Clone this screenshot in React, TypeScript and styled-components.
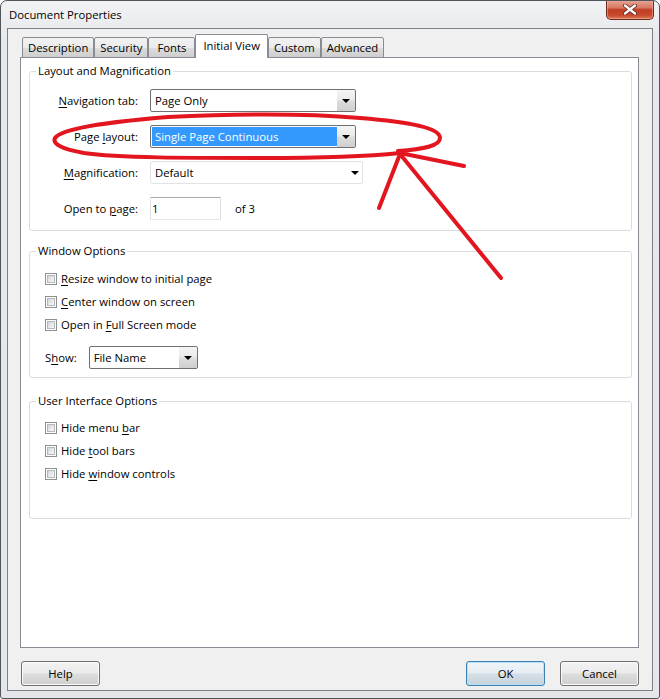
import React from "react";
import styled, { createGlobalStyle } from "styled-components";

const Global = createGlobalStyle`
  html, body { margin: 0; padding: 0; background: #ffffff; }
  body {
    font-family: "Open Sans", "Noto Sans", "DejaVu Sans", sans-serif;
    font-size: 11.3px;
    color: #000;
  }
  * { box-sizing: border-box; }
`;

const Window = styled.div`
  position: relative;
  width: 660px;
  height: 699px;
  border: 1px solid #50555b;
  border-radius: 7px 7px 3px 3px;
  background: linear-gradient(180deg, #f0f2f4 0px, #e6e8eb 40px, #e4e6e9 100%);
  display: flex;
  flex-direction: column;
  overflow: hidden;
`;

const TitleBar = styled.div`
  height: 27px;
  display: flex;
  align-items: flex-start;
  padding-left: 8px;
  flex-shrink: 0;
`;

const Title = styled.div`
  line-height: 27px;
  color: #000;
  text-shadow: 0 0 6px rgba(255, 255, 255, 0.9);
`;

const CloseButton = styled.div`
  margin-left: auto;
  margin-right: 5px;
  margin-top: -1px;
  width: 48px;
  height: 20px;
  border: 1px solid #6a2a1e;
  border-top: none;
  border-radius: 0 0 5px 5px;
  background: linear-gradient(180deg, #e9a898 0%, #d77a64 40%, #c23d22 52%, #c74a2e 80%, #dd7a58 100%);
  box-shadow: inset 0 0 0 1px rgba(255, 200, 180, 0.45);
  display: flex;
  align-items: center;
  justify-content: center;
`;

const Client = styled.div`
  margin: 0 6px;
  height: 663px;
  border: 1px solid #7d8185;
  background: #f0f0f0;
  padding: 5px 13px 0 12px;
  display: flex;
  flex-direction: column;
`;

const TabStrip = styled.div`
  display: flex;
  align-items: flex-end;
  padding-left: 2px;
  margin-bottom: -1px;
  position: relative;
  z-index: 1;
  height: 24px;
`;

const Tab = styled.div<{ $active?: boolean }>`
  min-width: 47px;
  height: ${(p) => (p.$active ? 24 : 21)}px;
  padding: 0 ${(p) => (p.$active ? 7 : 5)}px;
  padding-bottom: ${(p) => (p.$active ? 3 : 1)}px;
  border: 1px solid #898c95;
  border-bottom: ${(p) => (p.$active ? "none" : "1px solid #898c95")};
  border-radius: 2px 2px 0 0;
  background: ${(p) => (p.$active ? "#ffffff" : "linear-gradient(180deg, #f2f2f2 0%, #ebebeb 50%, #dddddd 51%, #cfcfcf 100%)")};
  display: flex;
  align-items: center;
  justify-content: center;
  white-space: nowrap;
`;

const Pane = styled.div`
  height: 591px;
  border: 1px solid #898c95;
  background: #ffffff;
  padding: 5px 6px 0 8px;
  display: flex;
  flex-direction: column;
  flex-shrink: 0;
`;

const Group = styled.fieldset<{ $h: number; $mt: number }>`
  margin: ${(p) => p.$mt}px 0 0 0;
  padding: 0;
  height: ${(p) => p.$h}px;
  min-width: 0;
  border: 1px solid #dadcdf;
  border-radius: 3px;
  flex-shrink: 0;
`;

const Legend = styled.legend`
  margin-left: 6px;
  padding: 0 2px;
  line-height: 16px;
`;

const FormGrid = styled.div`
  margin-top: 10px;
  display: grid;
  grid-template-columns: 110px auto;
  column-gap: 10px;
  row-gap: 13px;
  grid-auto-rows: 23px;
  align-items: center;
  justify-items: start;
`;

const Label = styled.div`
  justify-self: end;
  padding-right: 2px;
  white-space: nowrap;
`;

const U = styled.span`
  text-decoration: underline;
  text-underline-offset: 2px;
`;

const Combo = styled.div<{ $w: number; $flat?: boolean }>`
  width: ${(p) => p.$w}px;
  height: 23px;
  display: flex;
  align-items: stretch;
  border: 1px solid ${(p) => (p.$flat ? "#e1e3e6" : "#707070")};
  border-radius: 2px;
  background: #ffffff;
  overflow: hidden;
`;

const ComboText = styled.div<{ $selected?: boolean }>`
  flex: 1;
  margin: 1px 0 1px 1px;
  padding-left: 3px;
  display: flex;
  align-items: center;
  white-space: nowrap;
  background: ${(p) => (p.$selected ? "#3399ff" : "transparent")};
  color: ${(p) => (p.$selected ? "#ffffff" : "#000000")};
`;

const ComboButton = styled.div<{ $flat?: boolean }>`
  width: ${(p) => (p.$flat ? 15 : 18)}px;
  display: flex;
  align-items: center;
  justify-content: center;
  background: ${(p) => (p.$flat ? "transparent" : "linear-gradient(180deg, #f4f4f4 0%, #ebebeb 45%, #dcdcdc 55%, #cfcfcf 100%)")};
`;

const Arrow = styled.span`
  width: 0;
  height: 0;
  border-left: 4px solid transparent;
  border-right: 4px solid transparent;
  border-top: 4px solid #000;
  margin-top: 1px;
`;

const PageRow = styled.div`
  display: flex;
  align-items: center;
  gap: 14px;
`;

const TextInput = styled.div`
  width: 71px;
  height: 23px;
  border: 1px solid;
  border-color: #abadb3 #dbdfe6 #e3e9ef #e2e3ea;
  background: #fff;
  padding-left: 1px;
  display: flex;
  align-items: center;
`;

const Options = styled.div<{ $pt: number }>`
  padding: ${(p) => p.$pt}px 0 0 15px;
  display: flex;
  flex-direction: column;
  gap: 6px;
`;

const CheckRow = styled.label`
  height: 17px;
  display: flex;
  align-items: center;
  gap: 4px;
  white-space: nowrap;
`;

const CheckBox = styled.span`
  width: 12px;
  height: 12px;
  border: 1px solid #8e8f8f;
  background: #ffffff;
  padding: 1px;
  display: flex;
  &::after {
    content: "";
    flex: 1;
    border: 1px solid #b4b7bb;
    background: linear-gradient(135deg, #d3d5d8 0%, #e8e9ea 55%, #f7f7f7 100%);
  }
`;

const ShowRow = styled.div`
  margin-top: 7px;
  height: 23px;
  display: flex;
  align-items: center;
  gap: 12px;
`;

const Footer = styled.div`
  margin-top: 13px;
  padding-left: 1px;
  display: flex;
  align-items: center;
  gap: 15px;
`;

const Button = styled.div<{ $default?: boolean }>`
  width: 79px;
  height: 25px;
  border: 1px solid ${(p) => (p.$default ? "#3c7fb1" : "#707070")};
  border-radius: 3px;
  background: ${(p) =>
    p.$default
      ? "linear-gradient(180deg, #f0f4f7 0%, #e6edf2 48%, #d4dee6 52%, #c7d4de 100%)"
      : "linear-gradient(180deg, #f2f2f2 0%, #ebebeb 48%, #dddddd 52%, #cfcfcf 100%)"};
  box-shadow: inset 0 0 0 1px ${(p) => (p.$default ? "#b9e2f7" : "#fbfbfb")};
  display: flex;
  align-items: center;
  justify-content: center;
`;

const Spacer = styled.div`
  flex: 1;
`;

const Annotation = styled.svg`
  position: absolute;
  left: -1px;
  top: -1px;
  width: 660px;
  height: 699px;
  pointer-events: none;
  z-index: 5;
`;

const tabs = ["Description", "Security", "Fonts", "Initial View", "Custom", "Advanced"];

export default function App() {
  return (
    <>
      <Global />
      <Window>
        <TitleBar>
          <Title>Document Properties</Title>
          <CloseButton aria-label="Close">
            <svg width="14" height="11" viewBox="0 0 14 11">
              <path d="M2 1.5 L12 9.5 M12 1.5 L2 9.5" stroke="#5a2218" strokeWidth="4" strokeLinecap="round" />
              <path d="M2 1.5 L12 9.5 M12 1.5 L2 9.5" stroke="#ffffff" strokeWidth="2.4" strokeLinecap="round" />
            </svg>
          </CloseButton>
        </TitleBar>
        <Client>
          <TabStrip>
            {tabs.map((t) => (
              <Tab key={t} $active={t === "Initial View"}>
                {t}
              </Tab>
            ))}
          </TabStrip>
          <Pane>
            <Group $h={168} $mt={0}>
              <Legend>Layout and Magnification</Legend>
              <FormGrid>
                <Label>
                  <U>N</U>avigation tab:
                </Label>
                <Combo $w={206}>
                  <ComboText>Page Only</ComboText>
                  <ComboButton>
                    <Arrow />
                  </ComboButton>
                </Combo>
                <Label>
                  Page <U>l</U>ayout:
                </Label>
                <Combo $w={206}>
                  <ComboText $selected>Single Page Continuous</ComboText>
                  <ComboButton>
                    <Arrow />
                  </ComboButton>
                </Combo>
                <Label>
                  <U>M</U>agnification:
                </Label>
                <Combo $w={213} $flat>
                  <ComboText>Default</ComboText>
                  <ComboButton $flat>
                    <Arrow />
                  </ComboButton>
                </Combo>
                <Label>
                  Open to <U>p</U>age:
                </Label>
                <PageRow>
                  <TextInput>1</TextInput>
                  <span>of 3</span>
                </PageRow>
              </FormGrid>
            </Group>

            <Group $h={135} $mt={12}>
              <Legend>Window Options</Legend>
              <Options $pt={11}>
                <CheckRow>
                  <CheckBox />
                  <span>
                    <U>R</U>esize window to initial page
                  </span>
                </CheckRow>
                <CheckRow>
                  <CheckBox />
                  <span>
                    <U>C</U>enter window on screen
                  </span>
                </CheckRow>
                <CheckRow>
                  <CheckBox />
                  <span>
                    Open in <U>F</U>ull Screen mode
                  </span>
                </CheckRow>
                <ShowRow>
                  <span>
                    S<U>h</U>ow:
                  </span>
                  <Combo $w={109}>
                    <ComboText>File Name</ComboText>
                    <ComboButton>
                      <Arrow />
                    </ComboButton>
                  </Combo>
                </ShowRow>
              </Options>
            </Group>

            <Group $h={126} $mt={15}>
              <Legend>User Interface Options</Legend>
              <Options $pt={10}>
                <CheckRow>
                  <CheckBox />
                  <span>
                    Hide menu <U>b</U>ar
                  </span>
                </CheckRow>
                <CheckRow>
                  <CheckBox />
                  <span>
                    Hide <U>t</U>ool bars
                  </span>
                </CheckRow>
                <CheckRow>
                  <CheckBox />
                  <span>
                    Hide <U>w</U>indow controls
                  </span>
                </CheckRow>
              </Options>
            </Group>
          </Pane>
          <Footer>
            <Button>Help</Button>
            <Spacer />
            <Button $default>OK</Button>
            <Button>Cancel</Button>
          </Footer>
        </Client>

        <Annotation viewBox="0 0 660 699">
          <g fill="none" stroke="#e3161f" strokeWidth="4" strokeLinecap="round" strokeLinejoin="round">
            <path d="M464 166 L400 153 C362 157 320 158 262 158 C190 158 118 158 84 153 C62 149 52 144 55 138 C62 128 108 122 168 117 C232 114 300 113 360 118 C410 122 440 128 440 138 C440 146 424 149 398 151" />
            <path d="M379 208 L400 154 L501 278" />
          </g>
        </Annotation>
      </Window>
    </>
  );
}
